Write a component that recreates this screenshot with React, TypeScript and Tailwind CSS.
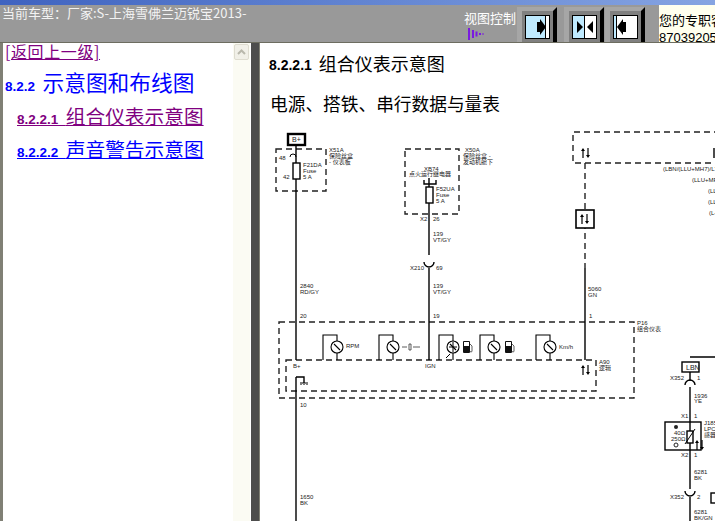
import React from 'react';

const cjk = { fontFamily: '"Noto Sans CJK SC", "Liberation Sans", sans-serif' };

// labels on the wiring diagram: [x, y, text]
const labels: [number, number, string][] = [
  [279, 160, '48'], [283, 179, '42'], [303, 167, 'F21DA'], [303, 173, 'Fuse'], [303, 179, '5 A'],
  [329, 152, 'X51A'], [329, 158, '保险丝盒'], [329, 164, '- 仪表板'],
  [465, 152, 'X50A'], [463, 158, '保险丝盒 -'], [463, 164, '发动机舱下'],
  [424, 171, 'XB74'], [409, 176, '点火运行继电器'],
  [436, 191, 'F52UA'], [436, 197, 'Fuse'], [436, 203, '5 A'],
  [420, 221, 'X2'], [433, 221, '26'], [433, 236, '139'], [433, 242, 'VT/GY'],
  [410, 270, 'X210'], [436, 270, '69'], [433, 288, '139'], [433, 294, 'VT/GY'],
  [300, 288, '2840'], [300, 294, 'RD/GY'], [300, 318, '20'], [433, 318, '19'],
  [293, 368, 'B+'], [425, 368, 'IGN'], [300, 407, '10'], [300, 499, '1650'], [300, 505, 'BK'],
  [346, 348, 'RPM'], [559, 349, 'Km/h'],
  [588, 291, '5060'], [588, 297, 'GN'], [589, 318, '1'],
  [637, 325, 'P16'], [637, 331, '组合仪表'], [599, 364, 'A90'], [599, 370, '逻辑'],
  [663, 171, '(LBN/(LLU+MH7)/L7'], [692, 182, '(LLU+MF'], [708, 193, '(LL'], [708, 204, '(LL'], [709, 215, '(L-'],
  [670, 380, 'X352'], [697, 380, '1'], [694, 398, '1936'], [694, 403, 'YE'],
  [681, 418, 'X1'], [694, 418, '1'], [704, 425, 'J185'], [704, 431, 'LPC/'], [704, 437, '感器'],
  [674, 435, '40Ω'], [671, 441, '250Ω'], [681, 457, 'X2'], [694, 457, '1'],
  [694, 474, '6281'], [694, 480, 'BK'], [670, 499, 'X352'], [697, 499, '2'],
  [694, 514, '6281'], [694, 520, 'BK/GN'],
];

// gauge groups on the cluster: left leg and circle centre
const gauges = [[323, 337], [379, 393], [439, 453], [480, 494], [536, 550]];

const Arrows = ({ x, y }: { x: number; y: number }) => (
  <g>
    <path d={`M${x + 2} ${y + 10}V${y + 2}M${x + 7} ${y}V${y + 8}`} stroke="#000" strokeWidth="1.2" />
    <path d={`M${x} ${y + 3}L${x + 2} ${y}L${x + 4} ${y + 3}ZM${x + 5} ${y + 7}L${x + 7} ${y + 10}L${x + 9} ${y + 7}Z`} fill="#000" />
  </g>
);

const Pump = ({ x }: { x: number }) => (
  <g>
    <rect x={x} y="341" width="7" height="12" rx="1" fill="#111" />
    <rect x={x + 1} y="342" width="5" height="4" fill="#fff" />
    <path d={`M${x + 7} 344l2 2v5a1 1 0 0 1-2 0`} stroke="#333" strokeWidth="0.8" fill="none" />
  </g>
);

const Diagram = () => (
  <svg viewBox="260 125 455 396" width="455" height="396" className="block">
    <g fill="none" stroke="#222" strokeWidth="1.4" strokeDasharray="6 4">
      <rect x="276" y="149" width="50" height="42" />
      <rect x="405" y="149" width="54" height="65" />
      <rect x="279" y="322" width="355" height="76" />
      <rect x="286" y="360" width="310" height="31" />
      <path d="M740 132H573V163H740" />
      <path d="M585 163V268" />
    </g>
    <g fill="none" stroke="#000" strokeWidth="1.4">
      <rect x="288" y="134" width="17" height="11" strokeWidth="2.4" />
      <path d="M296 146V360M296 377V521M296 377H304V383" />
      <path d="M429 178V255M429 268V360" />
      <path d="M585 268V360M690 357H715M690 372V381M690 387V489M690 497V521" />
      <path d="M290 157a3 3 0 0 1 6 0" strokeWidth="1" />
      <rect x="293" y="163" width="7" height="16" fill="#fff" />
      <rect x="426" y="187" width="7" height="16" fill="#fff" />
      <path d="M424 180V184H436V180" />
      <path d="M424 262a5 5 0 0 0 10 0M685 385a5 5 0 0 1 10 0M685 491a5 5 0 0 0 10 0" />
      <rect x="576" y="210" width="18" height="18" fill="#fff" strokeWidth="1.6" />
      <rect x="682" y="362" width="17" height="10" fill="#fff" />
      <rect x="665" y="422" width="36" height="28" />
      <rect x="711" y="493" width="8" height="10" />
      <path d="M714 148V158" />
      <rect x="687" y="431" width="6" height="12" fill="#fff" />
      <path d="M685 444L695 429" strokeWidth="1" />
      <path d="M300 383H308M301 385V384M304 385V384M307 385V384" strokeWidth="1" />
    </g>
    <Arrows x={581} y={148} />
    <Arrows x={580} y={214} />
    <Arrows x={581} y={365} />
    <Arrows x={695} y={440} />
    {gauges.map(([leg, cx]) => (
      <g key={leg} fill="none" stroke="#000" strokeWidth="1.1">
        <path d={`M${leg} 360V335H${cx}V341M${cx} 353V360`} />
        <circle cx={cx} cy="347" r="6" fill="#fff" />
        <path d={`M${cx - 3} 344L${cx + 3} 350`} />
      </g>
    ))}
    <path d="M402 347h5m6 0h7M409 344h2v6h-2z" stroke="#333" strokeWidth="0.8" fill="none" />
    <path d="M453 342v10M449 347h8M450 354l-4 4" stroke="#000" strokeWidth="1" fill="none" />
    <Pump x={463} />
    <Pump x={505} />
    <circle cx="676" cy="427" r="2" fill="#222" />
    <circle cx="676" cy="445" r="2" fill="none" stroke="#222" />
    <g fill="#222" fontSize="6" fontFamily='"Liberation Sans", "Noto Sans CJK SC", sans-serif'>
      {labels.map(([x, y, text]) => (
        <text key={`${x}-${y}-${text}`} x={x} y={y}>{text}</text>
      ))}
      <text x="292" y="142" fontSize="7">B+</text>
      <text x="686" y="370" fontSize="7">LBN</text>
    </g>
  </svg>
);

// right pointing / left pointing triangles of the view buttons
const ViewButton = ({ split, arrows }: { split: number; arrows: string }) => (
  <svg width="40" height="35" viewBox="0 0 40 35" className="block shrink-0">
    <rect width="40" height="35" fill="#a6a6a6" />
    <rect x="5" y="4" width="31" height="31" fill="#808080" />
    <path d="M36 4L40 0V35H36Z" fill="#000" />
    <rect x="8.5" y="8.5" width="24" height="23" fill="#fff" stroke="#000" />
    <rect x="9" y="9" width={split} height="22" fill="#bfeaff" />
    <path d={`M${9.5 + split} 9V31`} stroke="#000" />
    <path d={arrows} fill="#000" />
  </svg>
);

const Scrollbar = () => (
  <div className="flex w-[17px] shrink-0 flex-col bg-[#fbfbf3] pt-[1px]">
    <div className="mx-[1px] flex h-[16px] items-center justify-center rounded-[2px] border border-[#dedcd0] bg-[#f1f0e8]">
      <svg width="9" height="6" viewBox="0 0 9 6"><path d="M1 5L4.5 1.5L8 5" stroke="#b9b8ac" strokeWidth="2" fill="none" /></svg>
    </div>
  </div>
);

const NavLink = ({ num, title, className }: { num: string; title: string; className: string }) => (
  <div className={`whitespace-pre ${className}`} style={cjk}>
    <span className="font-['Liberation_Sans'] text-[13.5px] font-bold">{num + '  '}</span>
    <span>{title}</span>
  </div>
);

export default function App() {
  return (
    <div className="flex h-[521px] w-[715px] flex-col overflow-hidden bg-white">
      <div className="h-[5px] bg-gradient-to-r from-[#3f63c0] to-[#86a4e2]" />
      <div className="flex h-[37px] items-start bg-[#999999]">
        <div className="w-[464px] shrink-0 pl-[2px] text-[13px] leading-[16px] whitespace-nowrap text-[#f2f2f2]" style={cjk}>
          当前车型：厂家:S-上海雪佛兰迈锐宝2013-
        </div>
        <div className="w-[53px] shrink-0 pt-[4px]">
          <div className="text-[13px] leading-[17px] whitespace-nowrap text-white" style={cjk}>视图控制</div>
          <svg width="18" height="14" viewBox="0 0 18 14" className="mt-[1px] ml-[3px] block">
            <path d="M2 1V13M6 3V11M9.5 4.5V9.5M13 6V8M16 6.5V7.5" stroke="#7a1be0" strokeWidth="2" />
          </svg>
        </div>
        <div className="mt-[2px] flex">
          <ViewButton split={19} arrows="M20 15h3v-3l6 8-6 8v-3h-3z" />
          <div className="w-[7px]" />
          <ViewButton split={11} arrows="M13 14l6 6-6 6zM29 14l-6 6 6 6z" />
          <div className="w-[1px]" />
          <ViewButton split={2} arrows="M21 15h-3v-3l-6 8 6 8v-3h3z" />
        </div>
        <div className="ml-[14px] h-[37px] flex-1 overflow-hidden bg-[#ffffee] text-[13px] leading-[18px] whitespace-nowrap text-black" style={cjk}>
          <div className="pt-[6px]">您的专职客服</div>
          <div className="font-['Liberation_Sans'] text-[13px]">87039205</div>
        </div>
      </div>
      <div className="h-[1px] bg-[#6d6d60]" />
      <div className="flex min-h-0 flex-1">
        <div className="flex w-[251px] shrink-0 border-l-[3px] border-[#808075]">
          <div className="w-[230px] shrink-0 pl-[2px]">
            <div className="text-[16px] leading-[17px] tracking-[0.6px] whitespace-nowrap text-[#800080] underline" style={cjk}>[返回上一级]</div>
            <div className="mt-[9px]">
              <NavLink num="8.2.2" title="示意图和布线图" className="text-[21.7px] leading-[26px] text-[#0000ff]" />
            </div>
            <div className="mt-[4px] ml-[12px] flex flex-col gap-[5px]">
              <NavLink num="8.2.2.1" title="组合仪表示意图" className="text-[19.7px] leading-[24px] text-[#800080] underline" />
              <NavLink num="8.2.2.2" title="声音警告示意图" className="text-[19.7px] leading-[24px] text-[#0000ff] underline" />
            </div>
          </div>
          <Scrollbar />
        </div>
        <div className="w-[8px] shrink-0 bg-[#4d4d4d]" />
        <div className="w-[1px] shrink-0 bg-[#808075]" />
        <div className="min-w-0 flex-1 bg-white">
          <div className="flex h-[33px] items-end gap-[7px] pl-[9px] whitespace-nowrap text-black" style={cjk}>
            <span className="font-['Liberation_Sans'] text-[14px] font-bold">8.2.2.1</span>
            <span className="text-[18px] leading-[26px]">组合仪表示意图</span>
          </div>
          <div className="mt-[14px] h-[26px] pl-[10px] text-[17.7px] leading-[26px] whitespace-nowrap text-black" style={cjk}>电源、搭铁、串行数据与量表</div>
          <div className="pt-[9px]">
            <Diagram />
          </div>
        </div>
      </div>
    </div>
  );
}
